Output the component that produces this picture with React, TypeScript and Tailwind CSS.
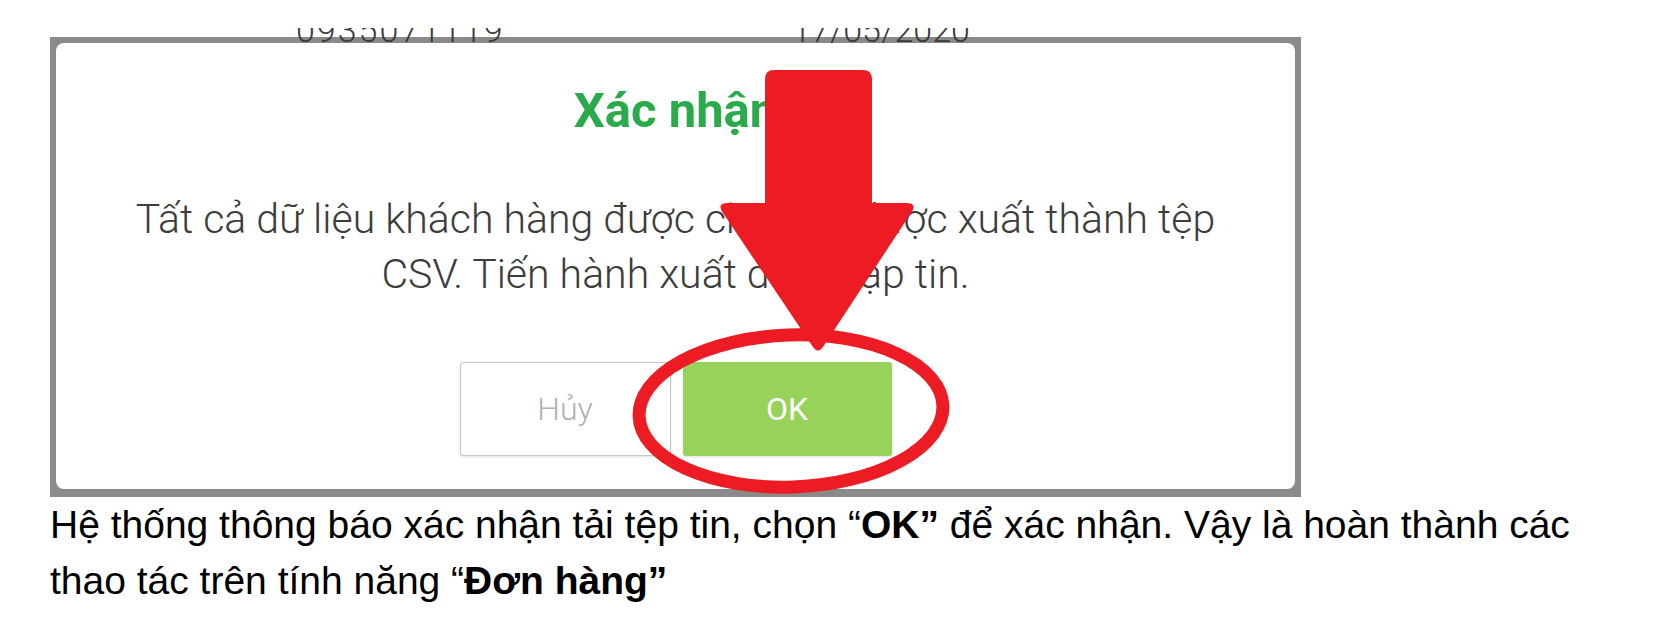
export default function App() {
  return (
    <div className="relative w-[1654px] h-[631px] overflow-hidden bg-white">
      <div className="pl-[50px] pt-[37px]">
        {/* dialog screenshot with its gray frame */}
        <div className="w-[1251px] h-[460px] bg-[#8a8a8a] pt-[6px] pl-[6px] pr-[6px] pb-[8px]">
          <div
            className="flex h-full flex-col items-center rounded-lg bg-white pt-[37px]"
            style={{ fontFamily: "Roboto, 'Noto Sans', sans-serif" }}
          >
            <h2 className="text-[49px] font-bold leading-[62px] text-[#2aaa4a]">Xác nhận</h2>
            <p className="mt-[50px] text-center text-[41px] font-light leading-[55px] text-[#3c3c3c]">
              Tất cả dữ liệu khách hàng được chọn sẽ được xuất thành tệp
              <br />
              CSV. Tiến hành xuất dạng tập tin.
            </p>
            <div className="mt-[60px] flex gap-3">
              <button className="h-[94px] w-[211px] rounded-[3px] border border-[#c8c8c8] bg-white text-[32px] font-light text-[#b0b0b0] shadow-sm">
                Hủy
              </button>
              <button className="h-[94px] w-[209px] rounded-[3px] bg-[#97d25b] text-[32px] text-white shadow-sm">
                OK
              </button>
            </div>
          </div>
        </div>
        <p
          className="text-[39px] leading-[56px] text-black"
          style={{ fontFamily: "'Liberation Sans', Arial, sans-serif" }}
        >
          Hệ thống thông báo xác nhận tải tệp tin, chọn “<b>OK”</b> để xác nhận. Vậy là hoàn thành các
          <br />
          thao tác trên tính năng “<b>Đơn hàng”</b>
        </p>
      </div>

      {/* text from the page behind, cut off by the crop */}
      <div
        className="absolute left-0 top-[28px] h-[15px] w-full overflow-hidden text-[34px] leading-none text-[#3a3a3a]"
        style={{ fontFamily: "Roboto, sans-serif" }}
      >
        <span className="absolute left-[296px] top-[-15px] font-light tracking-[2px]">0935071119</span>
        <span className="absolute left-[792px] top-[-15px] font-light">17/05/2020</span>
      </div>

      {/* red annotation: arrow and circle */}
      <svg className="pointer-events-none absolute inset-0" width="1654" height="631" viewBox="0 0 1654 631">
        <ellipse
          cx="791"
          cy="411"
          rx="152"
          ry="76"
          fill="none"
          stroke="#ed1c24"
          strokeWidth="13"
          transform="rotate(-2 791 411)"
        />
        <path
          d="M765 79 Q765 70 774 70 L863 70 Q872 70 872 79 L872 203 L906 203 Q918 203 911 213 L823 347 Q818 354 813 347 L723 213 Q716 203 728 203 L765 203 Z"
          fill="#ed1c24"
        />
      </svg>
    </div>
  );
}
